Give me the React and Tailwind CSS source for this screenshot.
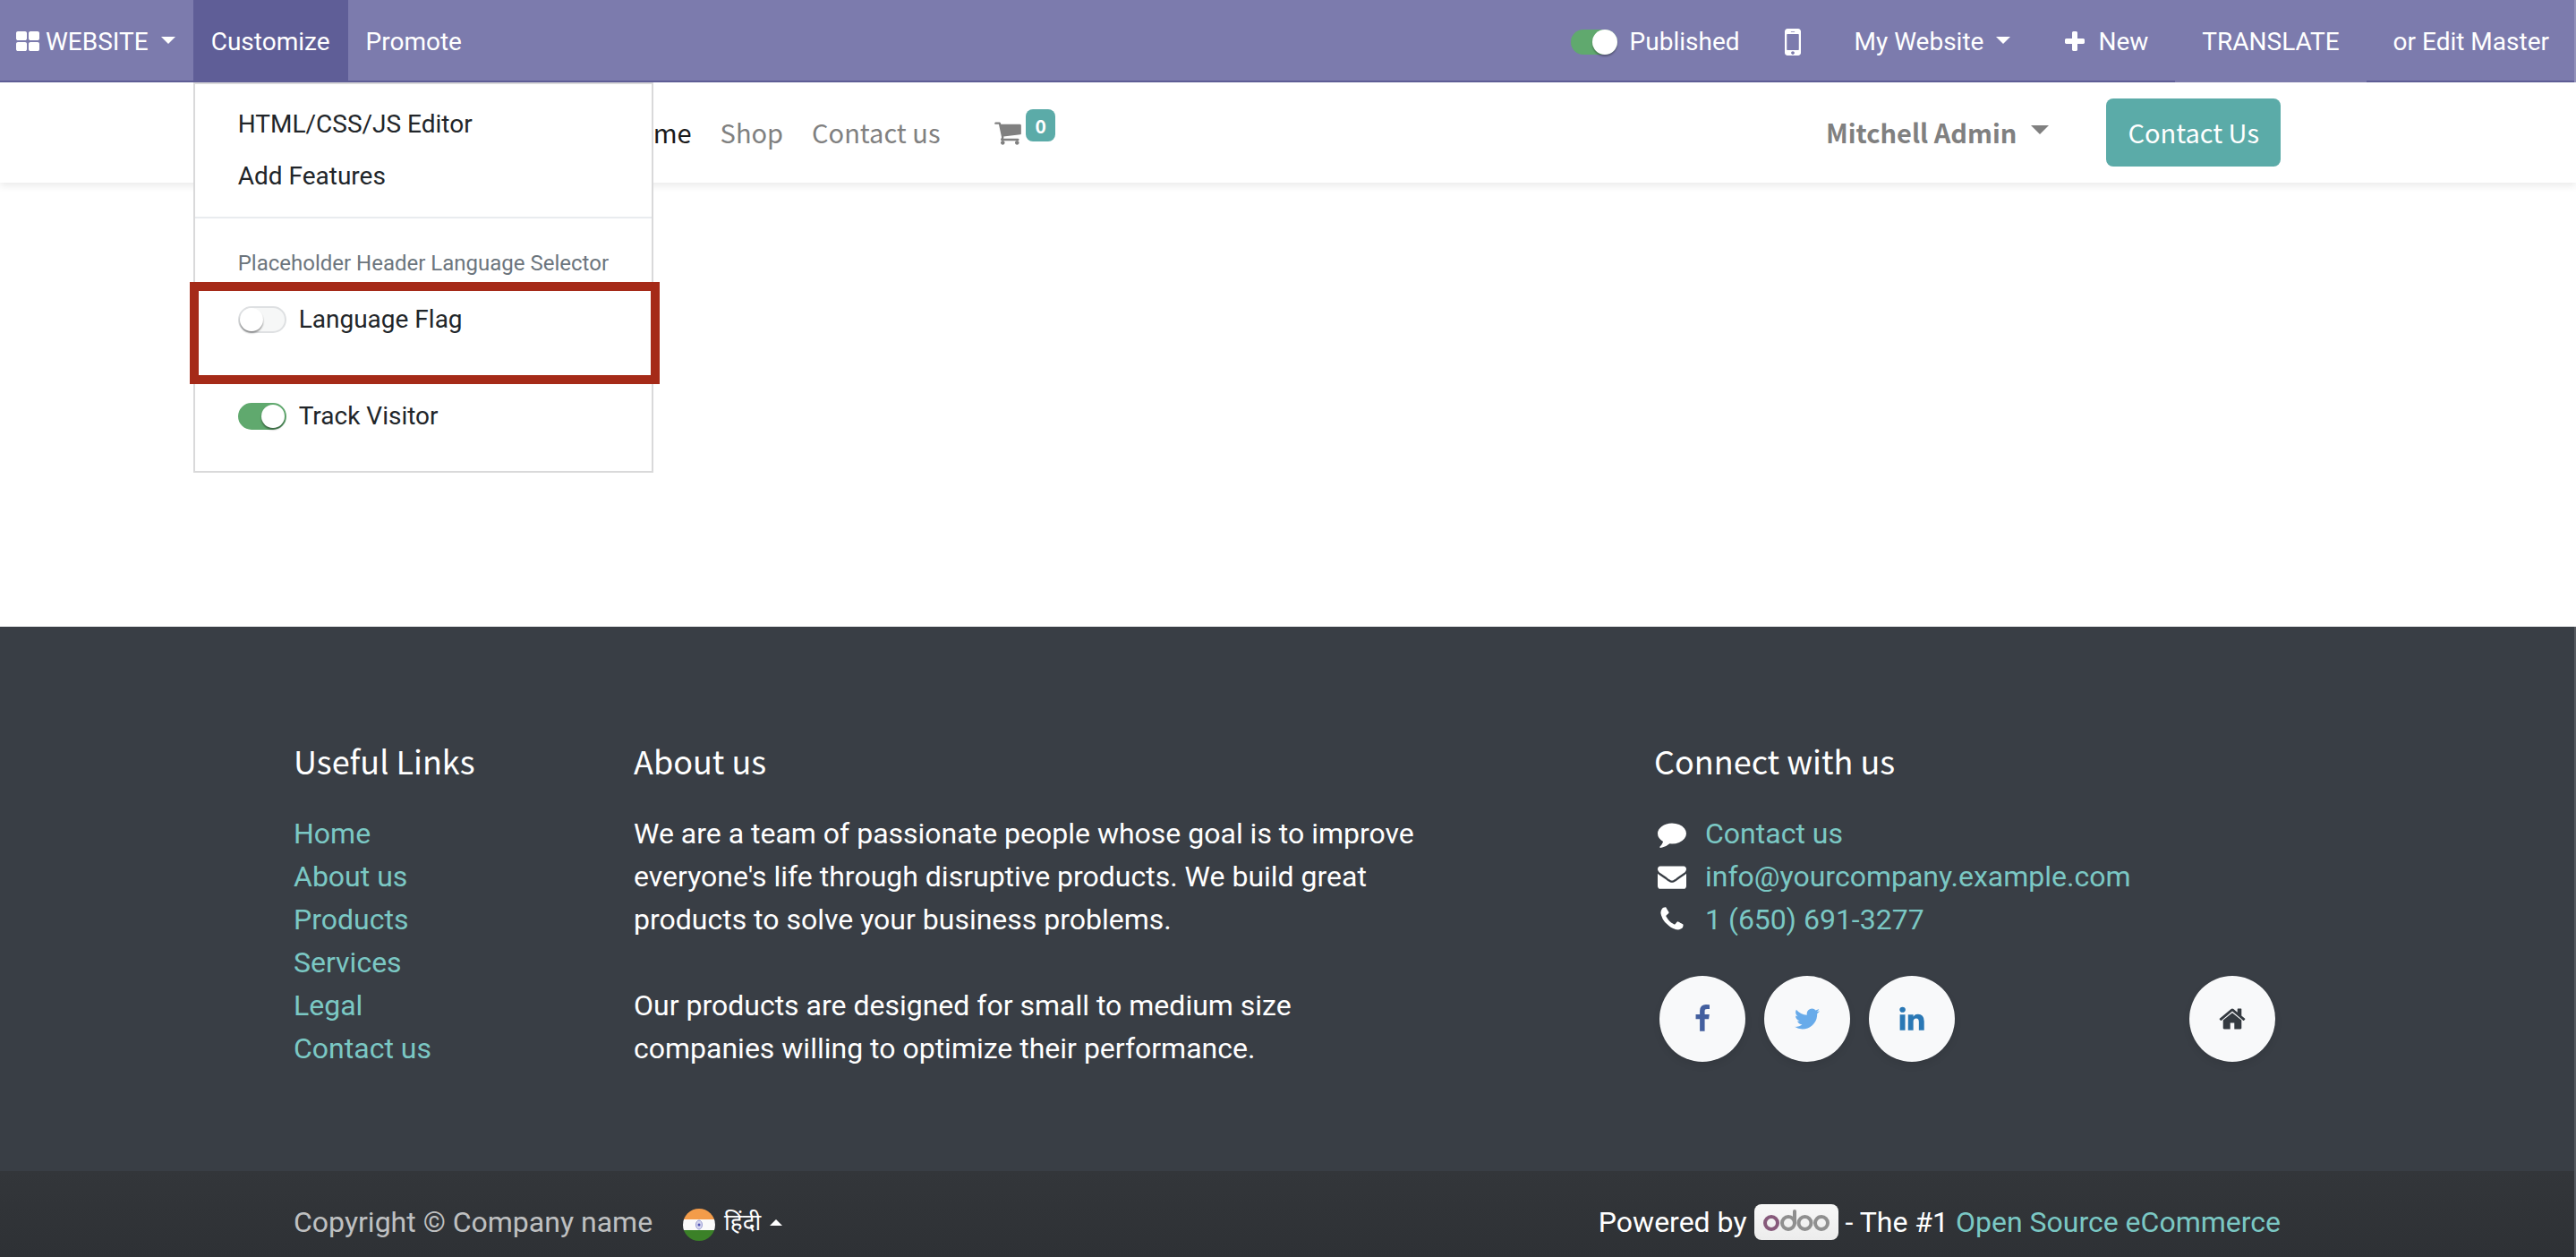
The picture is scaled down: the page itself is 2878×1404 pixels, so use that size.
const ICONS = {
  thLarge:
    "M832 1024v384q0 52-38 90t-90 38h-512q-52 0-90-38t-38-90v-384q0-52 38-90t90-38h512q52 0 90 38t38 90zm0-768v384q0 52-38 90t-90 38h-512q-52 0-90-38t-38-90v-384q0-52 38-90t90-38h512q52 0 90 38t38 90zm896 768v384q0 52-38 90t-90 38h-512q-52 0-90-38t-38-90v-384q0-52 38-90t90-38h512q52 0 90 38t38 90zm0-768v384q0 52-38 90t-90 38h-512q-52 0-90-38t-38-90v-384q0-52 38-90t90-38h512q52 0 90 38t38 90z",
  mobile:
    "M976 1408q0-33-23.5-56.5t-56.5-23.5-56.5 23.5-23.5 56.5 23.5 56.5 56.5 23.5 56.5-23.5 23.5-56.5zm208-160v-704q0-13-9.5-22.5t-22.5-9.5h-512q-13 0-22.5 9.5t-9.5 22.5v704q0 13 9.5 22.5t22.5 9.5h512q13 0 22.5-9.5t9.5-22.5zm-192-848q0-16-16-16h-160q-16 0-16 16t16 16h160q16 0 16-16zm288-16v1024q0 52-38 90t-90 38h-512q-52 0-90-38t-38-90v-1024q0-52 38-90t90-38h512q52 0 90 38t38 90z",
  plus:
    "M1600 736v192q0 40-28 68t-68 28h-416v416q0 40-28 68t-68 28h-192q-40 0-68-28t-28-68v-416h-416q-40 0-68-28t-28-68v-192q0-40 28-68t68-28h416v-416q0-40 28-68t68-28h192q40 0 68 28t28 68v416h416q40 0 68 28t28 68z",
  cart:
    "M704 1536q0 52-38 90t-90 38-90-38-38-90 38-90 90-38 90 38 38 90zm896 0q0 52-38 90t-90 38-90-38-38-90 38-90 90-38 90 38 38 90zm128-1088v512q0 24-16.5 42.5t-40.5 21.5l-1044 122q13 60 13 70 0 16-24 64h920q26 0 45 19t19 45-19 45-45 19h-1024q-26 0-45-19t-19-45q0-11 8-31.5t16-36 21.5-40 15.5-29.5l-177-823h-204q-26 0-45-19t-19-45 19-45 45-19h256q16 0 28.5 6.5t19.5 15.5 13 24.5 8 26 5.5 29.5 4.5 26h1201q26 0 45 19t19 45z",
  comment:
    "M1792 896q0 174-120 321.5t-326 233-450 85.5q-70 0-145-8-198 175-460 242-49 14-114 22-17 2-30.5-9t-17.5-29v-1q-3-4-.5-12t2-10 4.5-9.5l6-9 7-8.5 8-9q7-8 31-34.5t34.5-38 31-39.5 32.5-51 27-59 26-76q-157-89-247.5-220t-90.5-281q0-130 71-248.5t191-204.5 286-136.5 348-50.5q244 0 450 85.5t326 233 120 321.5z",
  envelope:
    "M1792 710v794q0 66-47 113t-113 47h-1472q-66 0-113-47t-47-113v-794q44 49 101 87 362 246 497 345 57 42 92.5 65.5t94.5 48 110 24.5h2q51 0 110-24.5t94.5-48 92.5-65.5q170-123 498-345 57-39 100-87zm0-294q0 79-49 151t-122 123q-376 261-468 325-10 7-42.5 31t-54 38.5-52 32.5-57.5 27-50 9h-2q-23 0-50-9t-57.5-27-52-32.5-54-38.5-42.5-31q-91-64-262-182.5t-205-142.5q-62-42-117-115.5t-55-136.5q0-78 41.5-130t118.5-52h1472q65 0 112.5 47t47.5 113z",
  phone:
    "M1600 1240q0 27-10 70.5t-21 68.5q-21 50-122 106-94 51-186 51-27 0-53-3.5t-57.5-12.5-47-14.5-55.5-20.5-49-18q-98-35-175-83-127-79-264-216t-216-264q-48-77-83-175-3-9-18-49t-20.5-55.5-14.5-47-12.5-57.5-3.5-53q0-92 51-186 56-101 106-122 25-11 68.5-21t70.5-10q14 0 21 3 18 6 53 76 11 19 30 54t35 63.5 31 53.5q3 4 17.5 25t21.5 35.5 7 28.5q0 20-28.5 50t-62 55-62 53-28.5 46q0 9 5 22.5t8.5 20.5 14 24 11.5 19q76 137 174 235t235 174q2 1 19 11.5t24 14 20.5 8.5 22.5 5q18 0 46-28.5t53-62 55-62 50-28.5q14 0 28.5 7t35.5 21.5 25 17.5q25 15 53.5 31t63.5 35 54 30q70 35 76 53 3 7 3 21z",
  facebook:
    "M1343 12v264h-157q-86 0-116 36t-30 108v189h293l-39 296h-254v759h-306v-759h-255v-296h255v-218q0-186 104-288.5t277-102.5q147 0 228 12z",
  twitter:
    "M1684 408q-67 98-162 167 1 14 1 42 0 130-38 259.5t-115.5 248.5-184.5 210.5-258 146-323 54.5q-271 0-496-145 35 4 78 4 225 0 401-138-105-2-188-64.5t-114-159.5q33 5 61 5 43 0 85-11-112-23-185.5-111.5t-73.5-205.5v-4q68 38 146 41-66-44-105-115t-39-154q0-88 44-163 121 149 294.5 238.5t371.5 99.5q-8-38-8-74 0-134 94.5-228.5t228.5-94.5q140 0 236 102 109-21 205-78-37 115-142 178 93-10 186-50z",
  linkedin:
    "M477 625v991h-330v-991h330zm21-306q1 73-50.5 122t-135.5 49h-2q-82 0-132-49t-50-122q0-74 51.5-122.5t134.5-48.5 133 48.5 51 122.5zm1166 729v568h-329v-530q0-105-40.5-164.5t-126.5-59.5q-63 0-105.5 34.5t-63.5 85.5q-11 30-11 81v553h-329q2-399 2-647t-1-296l-1-48h329v144h-2q20-32 41-56t56.5-52 87-43.5 114.5-15.5q171 0 275 113.5t104 332.5z",
  home:
    "M1472 992v480q0 26-19 45t-45 19h-384v-384h-256v384h-384q-26 0-45-19t-19-45v-480q0-1 .5-3t.5-3l575-474 575 474q1 2 1 6zm223-69l-62 74q-8 9-21 11h-3q-13 0-21-7l-692-577-692 577q-12 8-24 7-13-2-21-11l-62-74q-8-10-7-23.5t11-21.5l719-599q32-26 76-26t76 26l244 204v-195q0-14 9-23t23-9h192q14 0 23 9t9 23v408l219 182q10 8 11 21.5t-7 23.5z",
};

function Icon({ name, className }) {
  return (
    <svg viewBox="0 0 1792 1792" fill="currentColor" aria-hidden="true" className={className}>
      <path d={ICONS[name]} />
    </svg>
  );
}

function Caret({ up = false, className }) {
  return (
    <svg viewBox="0 0 16 8" fill="currentColor" aria-hidden="true" className={className}>
      <path d={up ? "M0 8L8 0l8 8z" : "M0 0h16L8 8z"} />
    </svg>
  );
}

function Switch({ id, label, defaultChecked = false }) {
  return (
    <>
      <input
        id={id}
        type="checkbox"
        defaultChecked={defaultChecked}
        className="h-[30px] w-[54px] shrink-0 cursor-pointer appearance-none rounded-full border-2 border-[#dee0e2] bg-[#f6f7f7] before:block before:size-[26px] before:rounded-full before:bg-white before:shadow-[0_2px_2px_rgba(0,0,0,0.4)] checked:border-[#60a96e] checked:bg-[#60a96e] checked:before:ml-6"
      />
      <label htmlFor={id} className="cursor-pointer">
        {label}
      </label>
    </>
  );
}

function CustomizeMenu() {
  return (
    <div className="absolute top-full left-0 z-10 mt-[2px] w-[514px] border-2 border-[#d9d9da] bg-white pt-4 pb-8 text-[#212529]">
      <a href="#editor" className="block px-12 leading-[58px]">
        HTML/CSS/JS Editor
      </a>
      <a href="#features" className="block px-12 leading-[58px]">
        Add Features
      </a>
      <hr className="mt-4 border-t-2 border-[#e9ecef]" />
      <h6 className="mt-8 px-12 text-2xl leading-9 whitespace-nowrap text-[#6c757d]">
        Placeholder Header Language Selector
      </h6>
      <div className="relative mt-4 flex h-[58px] items-center gap-[14px] px-12">
        <Switch id="language-flag" label="Language Flag" />
        <div className="pointer-events-none absolute -top-[13px] -right-[9px] -bottom-[43px] -left-[6px] border-[10px] border-[#a52a18]" />
      </div>
      <div className="mt-[50px] flex h-[58px] items-center gap-[14px] px-12">
        <Switch id="track-visitor" label="Track Visitor" defaultChecked />
      </div>
    </div>
  );
}

function AdminBar() {
  return (
    <nav className="flex h-[92px] items-stretch justify-between border-r-2 border-[#9392bb] bg-[#7c7bad] text-[28px] leading-[42px] whitespace-nowrap text-white">
      <div className="flex flex-1 items-stretch border-b-2 border-[#5f5e97]">
        <button type="button" className="flex items-center gap-[6px] pt-[3px] pr-5 pl-[17px]">
          <Icon name="thLarge" className="size-7" />
          WEBSITE
          <Caret className="mb-1 ml-2 h-2 w-4" />
        </button>
        <div className="relative flex items-stretch bg-[#5f5e97]">
          <button type="button" aria-expanded="true" className="px-5 pt-[3px]">
            Customize
          </button>
          <CustomizeMenu />
        </div>
        <button type="button" className="px-5 pt-[3px]">
          Promote
        </button>
      </div>
      <div className="flex items-stretch border-b-2 border-[#5f5e97] pt-[3px]">
        <div className="flex items-center gap-[14px] px-5">
          <input
            id="published"
            type="checkbox"
            defaultChecked
            className="h-7 w-[52px] cursor-pointer appearance-none rounded-full bg-[#60a96e] before:block before:size-7 before:rounded-full before:bg-white before:shadow-[0_2px_2px_rgba(0,0,0,0.3)] checked:before:ml-6"
          />
          <label htmlFor="published">Published</label>
        </div>
        <button type="button" aria-label="Mobile preview" className="px-[18px]">
          <Icon name="mobile" className="size-[42px]" />
        </button>
        <button type="button" className="flex items-center gap-[14px] pr-7 pl-[30px]">
          My Website
          <Caret className="mb-1 h-2 w-4" />
        </button>
        <button type="button" className="flex items-center gap-3 px-[30px]">
          <Icon name="plus" className="size-7" />
          New
        </button>
      </div>
      <button type="button" className="px-[30px] pt-[3px] pb-[2px]">
        TRANSLATE
      </button>
      <div className="flex items-center border-b-2 border-[#5f5e97] pt-[3px] pr-7 pl-[30px]">
        <a href="#master">or Edit Master</a>
      </div>
    </nav>
  );
}

function SiteHeader() {
  return (
    <header className="border-r-2 border-transparent bg-white font-['Noto_Sans_CJK_SC','Noto_Sans',sans-serif] text-[29px] leading-[48px] whitespace-nowrap text-[#808080] shadow-[0_4px_8px_rgba(0,0,0,0.08)]">
      <div className="mx-auto flex h-28 max-w-[2280px] items-center justify-between px-[30px]">
        <nav className="flex items-center gap-8 pl-[363px]">
          <a href="#home" className="pb-[2px] text-[#1a1a1a]">
            Home
          </a>
          <a href="#shop" className="pb-[2px]">
            Shop
          </a>
          <a href="#contact" className="pb-[2px]">
            Contact us
          </a>
          <a href="#cart" aria-label="Shopping cart" className="ml-7 flex items-center gap-1">
            <Icon name="cart" className="size-8" />
            <span className="mb-4 rounded-lg bg-[#5baba8] px-[10px] text-[21px] leading-9 font-bold text-white">0</span>
          </a>
        </nav>
        <div className="flex items-center gap-16">
          <button type="button" className="flex items-center gap-4 pb-[2px] font-bold">
            Mitchell Admin
            <Caret className="mb-1 h-[10px] w-5" />
          </button>
          <a href="#contact" className="rounded-lg bg-[#5baba8] px-6 pt-[13px] pb-[15px] text-white">
            Contact Us
          </a>
        </div>
      </div>
    </header>
  );
}

function FooterHeading({ children }) {
  return (
    <h5 className="mb-[34px] font-['Noto_Sans_CJK_SC','Noto_Sans',sans-serif] text-4xl leading-[48px]">{children}</h5>
  );
}

const LINKS = ["Home", "About us", "Products", "Services", "Legal", "Contact us"];

const CONTACTS = [
  { icon: "comment", text: "Contact us" },
  { icon: "envelope", text: "info@yourcompany.example.com" },
  { icon: "phone", text: "1 (650) 691-3277" },
];

function SocialLink({ name, label, className }) {
  return (
    <a
      href={`#${name}`}
      aria-label={label}
      className="flex size-24 items-center justify-center rounded-full bg-[#f8f9fa] shadow-[0_4px_8px_rgba(0,0,0,0.08)]"
    >
      <Icon name={name} className={className} />
    </a>
  );
}

function SiteFooter() {
  return (
    <footer className="flex flex-1 flex-col border-r-2 border-white/15 bg-[#393e45] text-[32px] leading-[48px] text-white">
      <div className="mx-auto grid w-full max-w-[2280px] grid-cols-12 pt-[125px] pb-[113px]">
        <section className="col-span-2 px-[30px]">
          <FooterHeading>Useful Links</FooterHeading>
          <ul className="text-[#7bc8c4]">
            {LINKS.map((text) => (
              <li key={text}>
                <a href="#page">{text}</a>
              </li>
            ))}
          </ul>
        </section>
        <section className="col-span-5 px-[30px]">
          <FooterHeading>About us</FooterHeading>
          <p>
            We are a team of passionate people whose goal is to improve everyone's life through disruptive products. We
            build great products to solve your business problems.
          </p>
          <p className="mt-12">
            Our products are designed for small to medium size companies willing to optimize their performance.
          </p>
        </section>
        <section className="col-span-4 col-start-9 px-[30px]">
          <FooterHeading>Connect with us</FooterHeading>
          <ul>
            {CONTACTS.map(({ icon, text }) => (
              <li key={text} className="flex items-center gap-[21px] pl-1">
                <Icon name={icon} className="size-8" />
                <a href="#contact" className="text-[#7bc8c4]">
                  {text}
                </a>
              </li>
            ))}
          </ul>
          <div className="mt-[39px] flex items-center gap-[21px] px-[6px]">
            <SocialLink name="facebook" label="Facebook" className="size-8 text-[#435f9f]" />
            <SocialLink name="twitter" label="Twitter" className="size-8 text-[#68abea]" />
            <SocialLink name="linkedin" label="LinkedIn" className="size-8 text-[#2a78b5]" />
            <div className="ml-auto">
              <SocialLink name="home" label="Home page" className="size-8 text-[#343a40]" />
            </div>
          </div>
        </section>
      </div>
      <div className="flex-1 bg-linear-to-b from-[#33363a] to-[#2e3135] whitespace-nowrap">
        <div className="mx-auto flex max-w-[2280px] items-center justify-between px-[30px] pt-[33px]">
          <div className="flex items-center gap-[34px]">
            <span className="text-[#bfc0c1]">Copyright © Company name</span>
            <button type="button" className="flex items-center gap-[10px] text-[26px]">
              <IndiaFlag />
              <span lang="hi">हिंदी</span>
              <Caret up className="h-[7px] w-[14px]" />
            </button>
          </div>
          <p className="flex items-center gap-2">
            Powered by
            <OdooLogo />
            <span>
              - The #1{" "}
              <a href="#ecommerce" className="text-[#7bc8c4]">
                Open Source eCommerce
              </a>
            </span>
          </p>
        </div>
      </div>
    </footer>
  );
}

function IndiaFlag() {
  return (
    <svg viewBox="0 0 36 36" aria-hidden="true" className="mt-[6px] size-9">
      <clipPath id="flag-circle">
        <circle cx="18" cy="18" r="18" />
      </clipPath>
      <g clipPath="url(#flag-circle)">
        <rect width="36" height="12" fill="#f39c4a" />
        <rect y="12" width="36" height="12" fill="#fafafa" />
        <rect y="24" width="36" height="12" fill="#3b8128" />
      </g>
      <ellipse cx="18" cy="18" rx="3.5" ry="5" fill="#d5d6ee" stroke="#9a9dd4" strokeWidth="1" />
      <circle cx="18" cy="18" r="1.5" fill="#4f53b5" />
    </svg>
  );
}

function OdooLogo() {
  return (
    <a
      href="#odoo"
      aria-label="Odoo"
      className="flex h-10 w-[94px] items-center justify-center rounded-lg bg-linear-to-b from-[#f8f8f8] to-[#ececec] pb-1"
    >
      <svg viewBox="0 0 74 24" fill="none" strokeWidth="4" className="h-6 w-[74px]">
        <circle cx="9" cy="15" r="7" stroke="#875a7b" />
        <circle cx="28" cy="15" r="7" stroke="#8f8f8f" />
        <path d="M35 15V2" stroke="#8f8f8f" strokeLinecap="round" />
        <circle cx="46.5" cy="15" r="7" stroke="#8f8f8f" />
        <circle cx="65" cy="15" r="7" stroke="#8f8f8f" />
      </svg>
    </a>
  );
}

export default function App() {
  return (
    <div className="flex min-h-screen flex-col bg-white font-[Roboto,'Noto_Sans',sans-serif]">
      <AdminBar />
      <SiteHeader />
      <main className="h-[496px]" />
      <SiteFooter />
    </div>
  );
}
